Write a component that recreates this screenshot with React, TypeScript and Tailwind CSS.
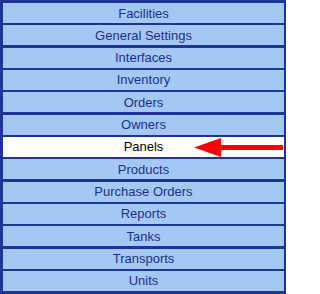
const ITEMS = [
  'Facilities',
  'General Settings',
  'Interfaces',
  'Inventory',
  'Orders',
  'Owners',
  'Panels',
  'Products',
  'Purchase Orders',
  'Reports',
  'Tanks',
  'Transports',
  'Units',
];

const ACTIVE = 'Panels';

function Arrow() {
  return (
    <svg className="absolute left-[188px] top-0" width="96" height="20" viewBox="0 0 96 20">
      <polygon points="3,10.5 30,1 30,8 92,8 92,13 30,13 30,20" fill="#ff0000" />
    </svg>
  );
}

export default function App() {
  return (
    <div className="w-[286px] h-[294px] bg-[#1f3497] pt-[3px] pb-[3px] pl-[3px] pr-[2px] flex flex-col gap-[2.33px] font-['Liberation_Sans',Arial,sans-serif] text-[13px]">
      {ITEMS.map((item) => {
        const active = item === ACTIVE;
        return (
          <div
            key={item}
            className={`relative h-5 shrink-0 flex items-center justify-center leading-none ${
              active ? 'bg-white text-black' : 'bg-[#a4c8f4] text-[#1d2f8c]'
            }`}
          >
            {item}
            {active && <Arrow />}
          </div>
        );
      })}
    </div>
  );
}
